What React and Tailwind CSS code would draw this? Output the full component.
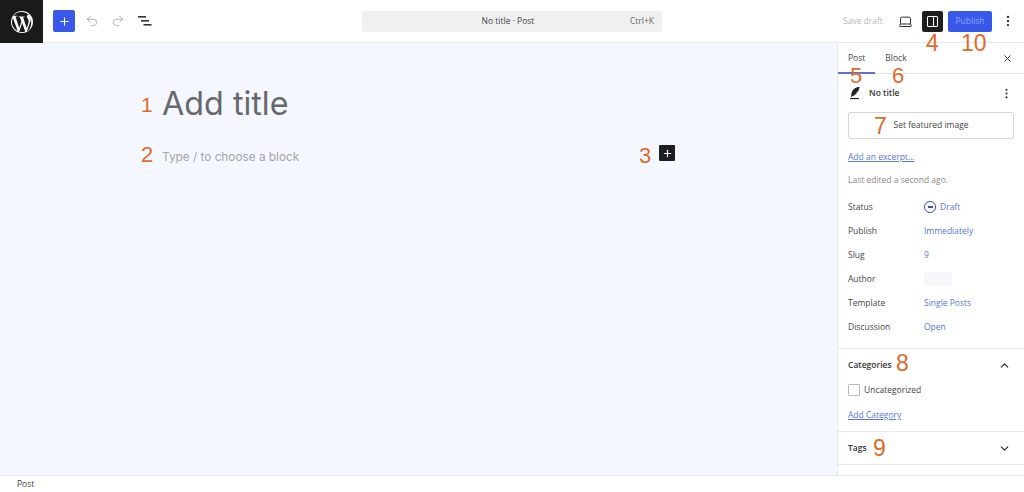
import { Plus, Undo2, Redo2, X, MoreVertical, Laptop, ChevronUp, ChevronDown } from 'lucide-react';

const metaRows = [
    { label: 'Status', value: 'Draft', icon: true },
    { label: 'Publish', value: 'Immediately' },
    { label: 'Slug', value: '9' },
    { label: 'Author', blank: true },
    { label: 'Template', value: 'Single Posts' },
    { label: 'Discussion', value: 'Open' },
];

function Mark({ className, children }) {
    return (
        <span className={`absolute font-['Liberation_Sans',sans-serif] text-[#dd6b2c] leading-none ${className}`}>
            {children}
        </span>
    );
}

function WpLogo() {
    return (
        <svg viewBox="0 0 24 24" className="w-[24px] h-[24px]" fill="#fff">
            <path d="M12 1a11 11 0 1 0 0 22 11 11 0 0 0 0-22zm0 1.1c2.6 0 4.9 1 6.7 2.6-.1 0-.1 0-.2 0-1 0-1.7.9-1.7 1.8 0 .8.5 1.5 1 2.3.4.7.8 1.5.8 2.8 0 .9-.3 1.9-.8 3.2l-1 3.4-3.7-10.9c.6 0 1.2-.1 1.2-.1.5-.1.5-.9-.1-.8 0 0-1.6.1-2.7.1-1 0-2.6-.1-2.6-.1-.6 0-.6.8-.1.8 0 0 .5.1 1.1.1l1.5 4.2-2.2 6.6L5.6 6.7c.6 0 1.2-.1 1.2-.1.5-.1.5-.9-.1-.8 0 0-1.6.1-2.7.1h-.6A9.9 9.9 0 0 1 12 2.1zM2.9 8l4.8 13.1A9.9 9.9 0 0 1 2.9 8zm9.3 5.1 3 8.3c0 .1 0 .1.1.1a9.9 9.9 0 0 1-6.1.2l3-8.6zm7.9-5.4c1.2 2.2 1.9 6.9-.6 11.4-.8 1.4-1.6 1.7-2.6 2.4l3-8.7c.6-1.4.7-2.6.7-3.6 0-.5 0-1-.1-1.5z" />
        </svg>
    );
}

function PostIcon() {
    return (
        <svg viewBox="0 0 14 14" className="w-[14px] h-[14px] shrink-0" fill="#222">
            <path d="M11.5.8C8 1.2 5.2 2.9 4 5.8c-.6 1.5-.7 2.7-.7 4L2.6 11l.8.3.6-1.2c1.3-.2 2.8-.6 3.9-1.6-.8 0-1.4-.1-1.9-.3 1-.1 2.2-.4 3-1-.6-.1-1-.2-1.4-.4 1.1-.2 2-.7 2.5-1.6C11 3.900 11.400 2.300 11.500.800z" />
            <rect x="2" y="12" width="9" height="1.1" />
        </svg>
    );
}

export default function App() {
    return (
        <div className="relative w-[1024px] h-[492px] flex flex-col bg-white overflow-hidden font-['Open_Sans',sans-serif] text-[#1e1e1e]">
            {/* Top bar */}
            <header className="h-[43px] shrink-0 flex items-center border-b border-[#e6e8ef]">
                <div className="w-[43px] h-[43px] shrink-0 bg-[#1a1a1a] flex items-center justify-center -mb-px">
                    <WpLogo />
                </div>
                <button className="ml-[10px] w-[22px] h-[22px] shrink-0 rounded-[2px] bg-[#3858e9] flex items-center justify-center">
                    <Plus size={13} strokeWidth={2} className="text-white" />
                </button>
                <Undo2 size={14} strokeWidth={1.5} className="ml-[10px] shrink-0 text-[#a8a8a8]" />
                <Redo2 size={14} strokeWidth={1.5} className="ml-[12px] shrink-0 text-[#a8a8a8]" />
                <svg viewBox="0 0 14 12" className="ml-[13px] w-[14px] h-[12px] shrink-0" fill="#333">
                    <rect x="0" y="1" width="8" height="1.6" />
                    <rect x="3" y="5" width="8" height="1.6" />
                    <rect x="5.500" y="9" width="8" height="1.6" />
                </svg>
                <div className="ml-[210px] w-[300px] h-[21px] shrink-0 rounded-[2px] bg-[#f0f0f0] flex items-center relative text-[8.5px] text-[#444]">
                    <span className="w-full text-center pr-[8px]">No title · Post</span>
                    <span className="absolute right-[8px] text-[#666]">Ctrl+K</span>
                </div>
                <span className="ml-[181px] w-[39px] shrink-0 whitespace-nowrap text-[8.5px] text-[#b5b5b5]">Save draft</span>
                <Laptop size={15} strokeWidth={1.5} className="ml-[16px] shrink-0 text-[#222]" />
                <button className="ml-[9px] w-[21px] h-[21px] shrink-0 rounded-[2px] bg-[#1e1e1e] flex items-center justify-center">
                    <span className="w-[11px] h-[11px] border border-white rounded-[1px] flex justify-end">
                        <span className="w-[4px] h-full bg-[#1e1e1e] border-l border-white" />
                    </span>
                </button>
                <button className="ml-[5px] w-[44px] h-[21px] shrink-0 rounded-[2px] bg-[#3858e9] text-[8.5px] text-[#8fa2f3]">Publish</button>
                <MoreVertical size={14} strokeWidth={2} className="ml-[9px] shrink-0 text-[#333]" />
            </header>

            <div className="flex-1 flex min-h-0">
                {/* Canvas */}
                <main className="flex-1 bg-[#f4f7ff] pl-[162px] pt-[38px]">
                    <h1 className="font-['Inter',sans-serif] text-[32.3px] leading-[46px] font-normal text-[#66686b]">Add title</h1>
                    <div className="relative w-[513px] mt-[18px] flex items-center h-[16px]">
                        <p className="pt-[9px] font-['Inter',sans-serif] text-[11.800px] text-[#a3a5a9]">Type / to choose a block</p>
                        <span className="absolute right-0 w-[16px] h-[16px] rounded-[1px] bg-[#1e1e1e] flex items-center justify-center">
                            <Plus size={11} strokeWidth={2.5} className="text-white" />
                        </span>
                    </div>
                </main>

                {/* Sidebar */}
                <aside className="w-[187px] shrink-0 border-l border-[#e6e8ef] flex flex-col text-[8.5px]">
                    <div className="h-[31px] shrink-0 flex items-center border-b border-[#e8e8e8] relative pl-[10px] pr-[11px] pt-[1px] text-[#444]">
                        <span>Post</span>
                        <span className="ml-[20px]">Block</span>
                        <X size={11} strokeWidth={2} className="ml-auto text-[#222]" />
                        <span className="absolute left-0 -bottom-px w-[37px] h-[2px] bg-[#5b77c4]" />
                    </div>
                    <div className="flex items-center h-[38px] pl-[10px] pr-[11px] shrink-0">
                        <PostIcon />
                        <span className="ml-[7px] font-semibold text-[#333]">No title</span>
                        <MoreVertical size={13} strokeWidth={2} className="ml-auto text-[#333]" />
                    </div>
                    <div className="mx-[10px] h-[27px] shrink-0 border border-[#d6d6d6] rounded-[2px] flex items-center justify-center text-[#444]">
                        Set featured image
                    </div>
                    <a className="ml-[10px] mt-[12px] underline text-[#5a76d6] leading-[12px]">Add an excerpt...</a>
                    <p className="ml-[10px] mt-[11px] text-[#888] leading-[12px]">Last edited a second ago.</p>
                    <div className="flex flex-col pl-[10px] pt-[9px] pb-[9px] border-b border-[#e8e8e8]">
                        {metaRows.map((row) => (
                            <div key={row.label} className="flex items-center h-[24px]">
                                <span className="w-[76px] text-[#444]">{row.label}</span>
                                {row.blank ? (
                                    <span className="w-[28px] h-[14px] bg-[#f7f8fc]" />
                                ) : (
                                    <span className="flex items-center text-[#5a76d6]">
                                        {row.icon && (
                                            <span className="w-[12px] h-[12px] mr-[4px] rounded-full border-[1.500px] border-[#3a4f9c] flex items-center justify-center">
                                                <span className="w-[5px] h-[2px] bg-[#3a4f9c]" />
                                            </span>
                                        )}
                                        {row.value}
                                    </span>
                                )}
                            </div>
                        ))}
                    </div>
                    <div className="pl-[10px] pr-[13px] border-b border-[#e8e8e8] h-[83px] shrink-0">
                        <div className="flex items-center justify-between h-[33px]">
                            <span className="font-semibold text-[#333]">Categories</span>
                            <ChevronUp size={13} strokeWidth={2} className="text-[#222]" />
                        </div>
                        <label className="flex items-center h-[14px] mt-[1px]">
                            <span className="w-[12px] h-[12px] border border-[#bbb] rounded-[1px] bg-white" />
                            <span className="ml-[4px] pt-[1px] text-[#444]">Uncategorized</span>
                        </label>
                        <a className="block mt-[12px] underline text-[#5a76d6] leading-[12px]">Add Category</a>
                    </div>
                    <div className="pl-[10px] pr-[13px] h-[33px] shrink-0 border-b border-[#e8e8e8] flex items-center justify-between">
                        <span className="font-semibold text-[#333]">Tags</span>
                        <ChevronDown size={13} strokeWidth={2} className="text-[#222]" />
                    </div>
                </aside>
            </div>

            {/* Footer */}
            <footer className="h-[17px] shrink-0 border-t border-[#e6e8ef] pl-[17px] flex items-center text-[8.5px] text-[#444]">Post</footer>

            {/* Orange annotations over the screenshot */}
            <Mark className="left-[141px] top-[94px] text-[21px]">1</Mark>
            <Mark className="left-[141px] top-[144px] text-[22px]">2</Mark>
            <Mark className="left-[639px] top-[145px] text-[22px]">3</Mark>
            <Mark className="left-[926px] top-[32px] text-[23px]">4</Mark>
            <Mark className="left-[850px] top-[65px] text-[22px]">5</Mark>
            <Mark className="left-[892px] top-[65px] text-[22px]">6</Mark>
            <Mark className="left-[874px] top-[115px] text-[23px]">7</Mark>
            <Mark className="left-[896px] top-[352px] text-[23px]">8</Mark>
            <Mark className="left-[873px] top-[437px] text-[23px]">9</Mark>
            <Mark className="left-[961px] top-[32px] text-[23px]">10</Mark>
        </div>
    );
}
